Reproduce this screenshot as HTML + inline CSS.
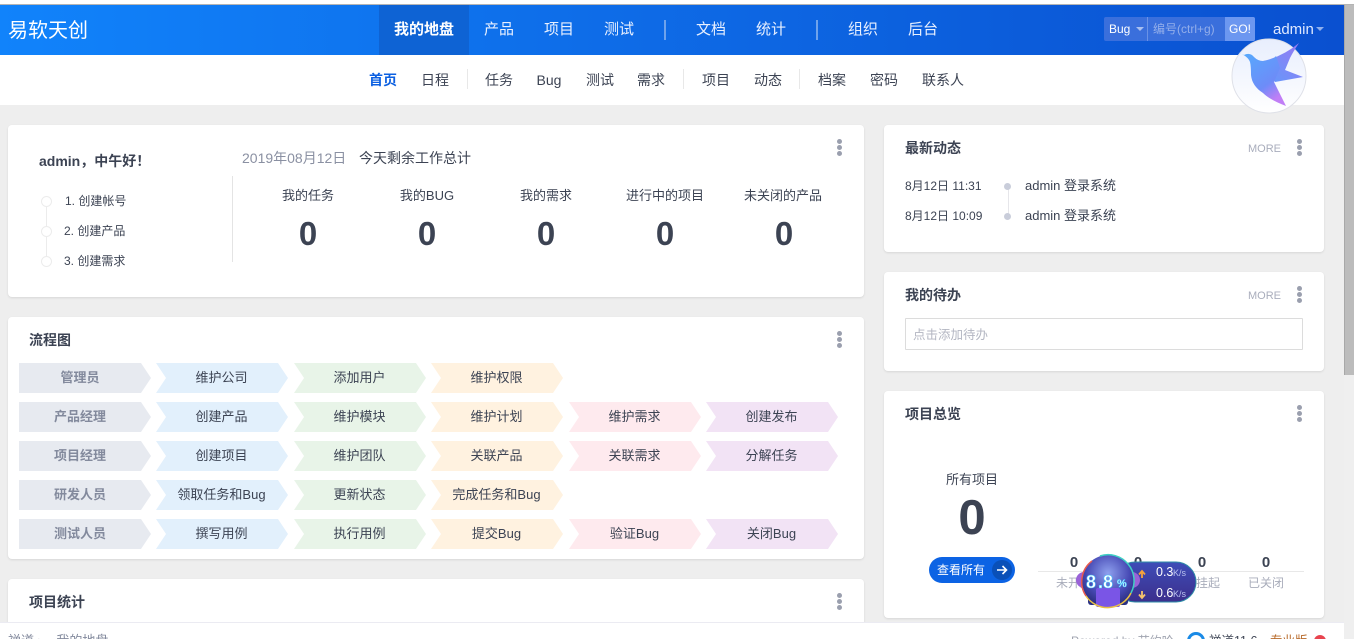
<!DOCTYPE html>
<html lang="zh-CN"><head><meta charset="utf-8"><title>我的地盘</title>
<style>
*{box-sizing:border-box}
html,body{margin:0;padding:0;width:1354px;height:639px;overflow:hidden}
body{background:#eeeeee;font-family:"Liberation Sans","Noto Sans CJK SC",sans-serif;font-size:13px;color:#3c4353}
#w{position:absolute;left:0;top:0;width:1354px;height:639px;overflow:hidden;background:#eeeeee}
.a{position:absolute;white-space:nowrap}
.c{position:absolute;white-space:nowrap;text-align:center;transform:translateX(-50%)}
.card{position:absolute;background:#fff;border-radius:4px;box-shadow:0 1px 2px rgba(0,0,0,.1)}
.nav{position:absolute;top:5px;height:50px;line-height:50px;color:#e8f0ff;font-size:15px;white-space:nowrap;transform:translateX(-50%)}
.sub{position:absolute;top:71px;line-height:18px;color:#3c4353;font-size:14px;white-space:nowrap;transform:translateX(-50%)}
.sep{position:absolute;background:#e8e8e8;width:1px}
.t{position:absolute;font-weight:bold;font-size:14px;color:#3c4353;white-space:nowrap;line-height:18px}
.dots{position:absolute;width:5px;height:17px}
.dots i{display:block;width:5px;height:5px;border-radius:50%;background:#9a9fae;margin-bottom:1px}
.more{position:absolute;font-size:11px;color:#a9adbc;line-height:14px}
.f{position:absolute;width:133px;height:30px;line-height:30px;text-align:center;padding-right:2px;font-size:13px;color:#3c4353;clip-path:polygon(0 0,122px 0,132px 15px,122px 30px,0 30px,10px 15px)}
.r{background:#e7eaf0;color:#838a9d;font-weight:bold;padding-right:11px;clip-path:polygon(0 0,122px 0,132px 15px,122px 30px,0 30px)}
.b{background:#e2f0fc}.g{background:#e8f4e8}.o{background:#fff2e0}.p{background:#feeaee}.v{background:#f2e3f5}
.num{position:absolute;font-size:33px;font-weight:bold;color:#3c4353;line-height:38px;transform:translateX(-50%)}
.lab{position:absolute;font-size:13px;color:#3c4353;line-height:18px;transform:translateX(-50%);white-space:nowrap}
.circ{position:absolute;left:41px;width:11px;height:11px;border:1px solid #ececec;border-radius:50%;background:#fff}
</style></head><body><div id="w">
<div class="a" style="left:0;top:0;width:1354px;height:5px;background:#fff;border-bottom:1px solid #b4b4b4"></div>
<div class="a" style="left:0;top:5px;width:1344px;height:50px;background:linear-gradient(90deg,#1183fb,#0a50d0)"></div>
<div class="a" style="left:8px;top:6px;line-height:50px;font-size:20px;color:#fff">易软天创</div>
<div class="a" style="left:379px;top:5px;width:90px;height:50px;background:#0e63d4"></div>
<div class="nav" style="left:424px;color:#fff;font-weight:bold">我的地盘</div>
<div class="nav" style="left:499px">产品</div>
<div class="nav" style="left:559px">项目</div>
<div class="nav" style="left:619px">测试</div>
<div class="a" style="left:664px;top:20px;width:2px;height:20px;background:#6fa3ec"></div>
<div class="nav" style="left:711px">文档</div>
<div class="nav" style="left:771px">统计</div>
<div class="a" style="left:816px;top:20px;width:2px;height:20px;background:#6fa3ec"></div>
<div class="nav" style="left:863px">组织</div>
<div class="nav" style="left:923px">后台</div>
<div class="a" style="left:1104px;top:17px;width:151px;height:24px;background:#3a6fdc;border-radius:2px"></div>
<div class="a" style="left:1147px;top:17px;width:1px;height:24px;background:#6a92e6"></div>
<div class="a" style="left:1109px;top:18px;line-height:23px;font-size:12px;color:#fff">Bug</div>
<div class="a" style="left:1136px;top:27px;border:4px solid transparent;border-top:4px solid #a9c0f0;border-bottom:0"></div>
<div class="a" style="left:1153px;top:17px;line-height:24px;font-size:12px;color:#93aeea">编号(ctrl+g)</div>
<div class="a" style="left:1225px;top:17px;width:30px;height:24px;line-height:24px;text-align:center;font-size:12px;color:#fff;background:#6c97f0;border-radius:0 2px 2px 0">GO!</div>
<div class="a" style="left:1273px;top:17px;line-height:26px;font-size:15px;color:#dfe9ff">admin</div>
<div class="a" style="left:1316px;top:27px;border:4px solid transparent;border-top:4px solid #8fb0ee;border-bottom:0"></div>
<div class="a" style="left:1344px;top:5px;width:10px;height:634px;background:#efefef"></div>
<div class="a" style="left:1344px;top:5px;width:10px;height:370px;background:#bcbcbc;border-left:1px solid #a8a8a8"></div>
<div class="a" style="left:0;top:55px;width:1344px;height:50px;background:#fff"></div>
<div class="sub" style="left:383px;color:#0c60e1;font-weight:bold">首页</div>
<div class="sub" style="left:435px">日程</div>
<div class="sep" style="left:467px;top:69px;height:20px"></div>
<div class="sub" style="left:499px">任务</div>
<div class="sub" style="left:549px">Bug</div>
<div class="sub" style="left:600px">测试</div>
<div class="sub" style="left:651px">需求</div>
<div class="sep" style="left:683px;top:69px;height:20px"></div>
<div class="sub" style="left:716px">项目</div>
<div class="sub" style="left:768px">动态</div>
<div class="sep" style="left:799px;top:69px;height:20px"></div>
<div class="sub" style="left:832px">档案</div>
<div class="sub" style="left:884px">密码</div>
<div class="sub" style="left:943px">联系人</div>
<div class="card" style="left:8px;top:125px;width:856px;height:172px"></div>
<div class="a" style="left:39px;top:151px;line-height:20px;font-size:14px;font-weight:bold">admin，中午好！</div>
<div class="a" style="left:46px;top:201px;width:1px;height:60px;background:#ececec"></div>
<div class="circ" style="top:196px"></div><div class="circ" style="top:226px"></div><div class="circ" style="top:256px"></div>
<div class="a" style="left:65px;top:192px;line-height:18px;font-size:12px">1. 创建帐号</div>
<div class="a" style="left:64px;top:222px;line-height:18px;font-size:12px">2. 创建产品</div>
<div class="a" style="left:64px;top:252px;line-height:18px;font-size:12px">3. 创建需求</div>
<div class="a" style="left:242px;top:149px;line-height:18px;font-size:14px;color:#8a90a2">2019年08月12日</div>
<div class="a" style="left:359px;top:149px;line-height:18px;font-size:14px">今天剩余工作总计</div>
<div class="sep" style="left:232px;top:176px;height:86px;background:#e4e4e4"></div>
<div class="lab" style="left:308px;top:187px">我的任务</div><div class="num" style="left:308px;top:215px">0</div>
<div class="lab" style="left:427px;top:187px">我的BUG</div><div class="num" style="left:427px;top:215px">0</div>
<div class="lab" style="left:546px;top:187px">我的需求</div><div class="num" style="left:546px;top:215px">0</div>
<div class="lab" style="left:665px;top:187px">进行中的项目</div><div class="num" style="left:665px;top:215px">0</div>
<div class="lab" style="left:783px;top:187px">未关闭的产品</div><div class="num" style="left:784px;top:215px">0</div>
<div class="dots" style="left:837px;top:139px"><i></i><i></i><i></i></div>
<div class="card" style="left:8px;top:317px;width:856px;height:242px"></div>
<div class="t" style="left:29px;top:331px">流程图</div>
<div class="dots" style="left:837px;top:331px"><i></i><i></i><i></i></div>
<div class="f r" style="left:19px;top:363px">管理员</div><div class="f b" style="left:156px;top:363px">维护公司</div><div class="f g" style="left:294px;top:363px">添加用户</div><div class="f o" style="left:431px;top:363px">维护权限</div>
<div class="f r" style="left:19px;top:402px">产品经理</div><div class="f b" style="left:156px;top:402px">创建产品</div><div class="f g" style="left:294px;top:402px">维护模块</div><div class="f o" style="left:431px;top:402px">维护计划</div><div class="f p" style="left:569px;top:402px">维护需求</div><div class="f v" style="left:706px;top:402px">创建发布</div>
<div class="f r" style="left:19px;top:441px">项目经理</div><div class="f b" style="left:156px;top:441px">创建项目</div><div class="f g" style="left:294px;top:441px">维护团队</div><div class="f o" style="left:431px;top:441px">关联产品</div><div class="f p" style="left:569px;top:441px">关联需求</div><div class="f v" style="left:706px;top:441px">分解任务</div>
<div class="f r" style="left:19px;top:480px">研发人员</div><div class="f b" style="left:156px;top:480px">领取任务和Bug</div><div class="f g" style="left:294px;top:480px">更新状态</div><div class="f o" style="left:431px;top:480px">完成任务和Bug</div>
<div class="f r" style="left:19px;top:519px">测试人员</div><div class="f b" style="left:156px;top:519px">撰写用例</div><div class="f g" style="left:294px;top:519px">执行用例</div><div class="f o" style="left:431px;top:519px">提交Bug</div><div class="f p" style="left:569px;top:519px">验证Bug</div><div class="f v" style="left:706px;top:519px">关闭Bug</div>
<div class="card" style="left:8px;top:579px;width:856px;height:70px"></div>
<div class="t" style="left:29px;top:593px">项目统计</div>
<div class="dots" style="left:837px;top:593px"><i></i><i></i><i></i></div>
<div class="card" style="left:884px;top:125px;width:440px;height:127px"></div>
<div class="t" style="left:905px;top:139px">最新动态</div>
<div class="more" style="left:1248px;top:142px">MORE</div>
<div class="dots" style="left:1297px;top:139px"><i></i><i></i><i></i></div>
<div class="a" style="left:905px;top:177px;line-height:18px;font-size:12px">8月12日 11:31</div>
<div class="a" style="left:905px;top:207px;line-height:18px;font-size:12px">8月12日 10:09</div>
<div class="a" style="left:1008px;top:186px;width:1px;height:30px;background:#e6e6ea"></div>
<div class="a" style="left:1004px;top:183px;width:7px;height:7px;border-radius:50%;background:#c9cdda"></div>
<div class="a" style="left:1004px;top:213px;width:7px;height:7px;border-radius:50%;background:#c9cdda"></div>
<div class="a" style="left:1025px;top:177px;line-height:18px;font-size:13px">admin 登录系统</div>
<div class="a" style="left:1025px;top:207px;line-height:18px;font-size:13px">admin 登录系统</div>
<div class="card" style="left:884px;top:272px;width:440px;height:99px"></div>
<div class="t" style="left:905px;top:286px">我的待办</div>
<div class="more" style="left:1248px;top:289px">MORE</div>
<div class="dots" style="left:1297px;top:286px"><i></i><i></i><i></i></div>
<div class="a" style="left:905px;top:318px;width:398px;height:32px;border:1px solid #dcdcdc;border-radius:1px;line-height:32px;padding-left:7px;font-size:12.500px;color:#b3b6c2">点击添加待办</div>
<div class="card" style="left:884px;top:391px;width:440px;height:227px"></div>
<div class="t" style="left:905px;top:405px">项目总览</div>
<div class="dots" style="left:1297px;top:405px"><i></i><i></i><i></i></div>
<div class="c" style="left:972px;top:471px;line-height:18px;font-size:13px">所有项目</div>
<div class="c" style="left:972px;top:490px;line-height:56px;font-size:49px;font-weight:bold">0</div>
<div class="a" style="left:929px;top:557px;width:86px;height:26px;border-radius:13px;background:#0c63e4;color:#fff;font-size:12px;line-height:26px;padding-left:8px">查看所有</div>
<div class="a" style="left:992px;top:560px;width:20px;height:20px;border-radius:50%;background:#0a50b8"></div>
<svg class="a" style="left:992px;top:560px" width="20" height="20" viewBox="0 0 20 20"><path d="M5 10H14.500M10.500 6l4 4-4 4" fill="none" stroke="#fff" stroke-width="1.600"/></svg>
<div class="a" style="left:1038px;top:571px;width:266px;height:1px;background:#e8e8e8"></div>
<div class="c" style="left:1074px;top:554px;font-size:15px;font-weight:bold;line-height:18px">0</div>
<div class="c" style="left:1138px;top:554px;font-size:15px;font-weight:bold;line-height:18px">0</div>
<div class="c" style="left:1202px;top:554px;font-size:15px;font-weight:bold;line-height:18px">0</div>
<div class="c" style="left:1266px;top:554px;font-size:15px;font-weight:bold;line-height:18px">0</div>
<div class="c" style="left:1074px;top:574px;font-size:12px;color:#a9adbb;line-height:18px">未开始</div>
<div class="c" style="left:1138px;top:574px;font-size:12px;color:#a9adbb;line-height:18px">进行中</div>
<div class="c" style="left:1202px;top:574px;font-size:12px;color:#a9adbb;line-height:18px">已挂起</div>
<div class="c" style="left:1266px;top:574px;font-size:12px;color:#a9adbb;line-height:18px">已关闭</div>
<div class="a" style="left:0;top:622px;width:1344px;height:17px;background:#fff;border-top:1px solid #ebebf2"></div>
<div class="a" style="left:8px;top:632px;line-height:18px;font-size:13px;color:#838a9d">禅道 ›&nbsp;&nbsp;&nbsp;&nbsp;我的地盘</div>
<div class="a" style="left:1071px;top:632px;line-height:18px;font-size:12px;color:#a0a4b0">Powered by 节约哈</div>
<div class="a" style="left:1187px;top:632px;width:18px;height:18px;border-radius:50%;border:3px solid #1a8ae6;background:#fff"></div>
<div class="a" style="left:1209px;top:632px;line-height:18px;font-size:12.500px">禅道11.6</div>
<div class="a" style="left:1270px;top:632px;line-height:18px;font-size:12.500px;color:#b86a2a">专业版</div>
<div class="a" style="left:1314px;top:635px;width:12px;height:12px;border-radius:50%;background:#e8434e"></div>
<svg class="a" style="left:1230px;top:38px" width="80" height="76" viewBox="0 0 80 76">
<defs><linearGradient id="bg" x1="0" y1="0" x2="0" y2="1"><stop offset="0" stop-color="#e8eefd"/><stop offset="1" stop-color="#fff"/></linearGradient>
<linearGradient id="bd" x1="0" y1=".1" x2=".6" y2="1"><stop offset="0" stop-color="#56aafd"/><stop offset=".7" stop-color="#6d8cf8"/><stop offset="1" stop-color="#c07ef6"/></linearGradient>
<linearGradient id="wg" x1="0" y1="1" x2="1" y2="0"><stop offset="0" stop-color="#5f9cfb"/><stop offset="1" stop-color="#9a78f3"/></linearGradient></defs>
<circle cx="39" cy="38" r="37" fill="url(#bg)" stroke="#dfe1e8"/>
<path d="M33 23 Q52 19 69 5 Q63 14 60 20 L55 32 L73 39 L45 44 L38 34Z" fill="url(#wg)"/>
<path d="M7 14 L14 17 Q20 14 24 19 Q28 23 33 23 Q43 22 46 18 L50 30 L44 44 L56 68 Q40 62 33 55 Q22 48 21 37 Q21 28 20 24 Q18 18 7 14Z" fill="url(#bd)"/>
</svg>
<svg class="a" style="left:1075px;top:550px" width="125" height="65" viewBox="0 0 125 65">
<defs><linearGradient id="pl" x1="0" y1="0" x2="0" y2="1"><stop offset="0" stop-color="#3e4db8"/><stop offset="1" stop-color="#3c2f8c"/></linearGradient>
<radialGradient id="ci" cx=".5" cy=".35" r=".7"><stop offset="0" stop-color="#8ea0ee"/><stop offset=".6" stop-color="#4649b4"/><stop offset="1" stop-color="#24266f"/></radialGradient></defs>
<rect x="40" y="12" width="81" height="40" rx="20" fill="url(#pl)" stroke="#2f8ea8"/>
<circle cx="9" cy="30" r="8" fill="#9a62d8"/><circle cx="57" cy="30" r="8" fill="#9a62d8"/>
<rect x="13" y="38" width="40" height="17" rx="3" fill="#2a3184"/>
<circle cx="33" cy="31" r="26" fill="url(#ci)"/>
<rect x="21" y="38" width="24" height="19" rx="2" fill="#7a55e6"/>
<path d="M11 46A26 26 0 0 1 17 11" fill="none" stroke="#e8594e" stroke-width="1.500"/>
<path d="M11 46A26 26 0 0 0 56 43" fill="none" stroke="#e9c044" stroke-width="1.500"/>
<path d="M56 43A26 26 0 0 0 25 6" fill="none" stroke="#3fd0c4" stroke-width="1.500"/>
<g font-family="Liberation Sans" font-weight="bold" fill="#fff" stroke="#38c4ff" stroke-width=".5"><text x="11" y="38" font-size="18">8</text><text x="23" y="38" font-size="18">.</text><text x="28" y="38" font-size="18">8</text><text x="42" y="37" font-size="11">%</text></g>
<path d="M67 28V22M64 24.500L67 21L70 24.500" fill="none" stroke="#f6a23c" stroke-width="1.800"/>
<path d="M67 41V47M64 44.500L67 48L70 44.500" fill="none" stroke="#f6c36c" stroke-width="1.800"/>
<text x="81" y="26" font-family="Liberation Sans" font-size="12.500" fill="#fff">0.3</text><text x="98" y="26" font-family="Liberation Sans" font-size="9" fill="#b9c2ee">K/s</text>
<text x="81" y="47" font-family="Liberation Sans" font-size="12.500" fill="#fff">0.6</text><text x="98" y="47" font-family="Liberation Sans" font-size="9" fill="#b9c2ee">K/s</text>
</svg>
</div></body></html>
